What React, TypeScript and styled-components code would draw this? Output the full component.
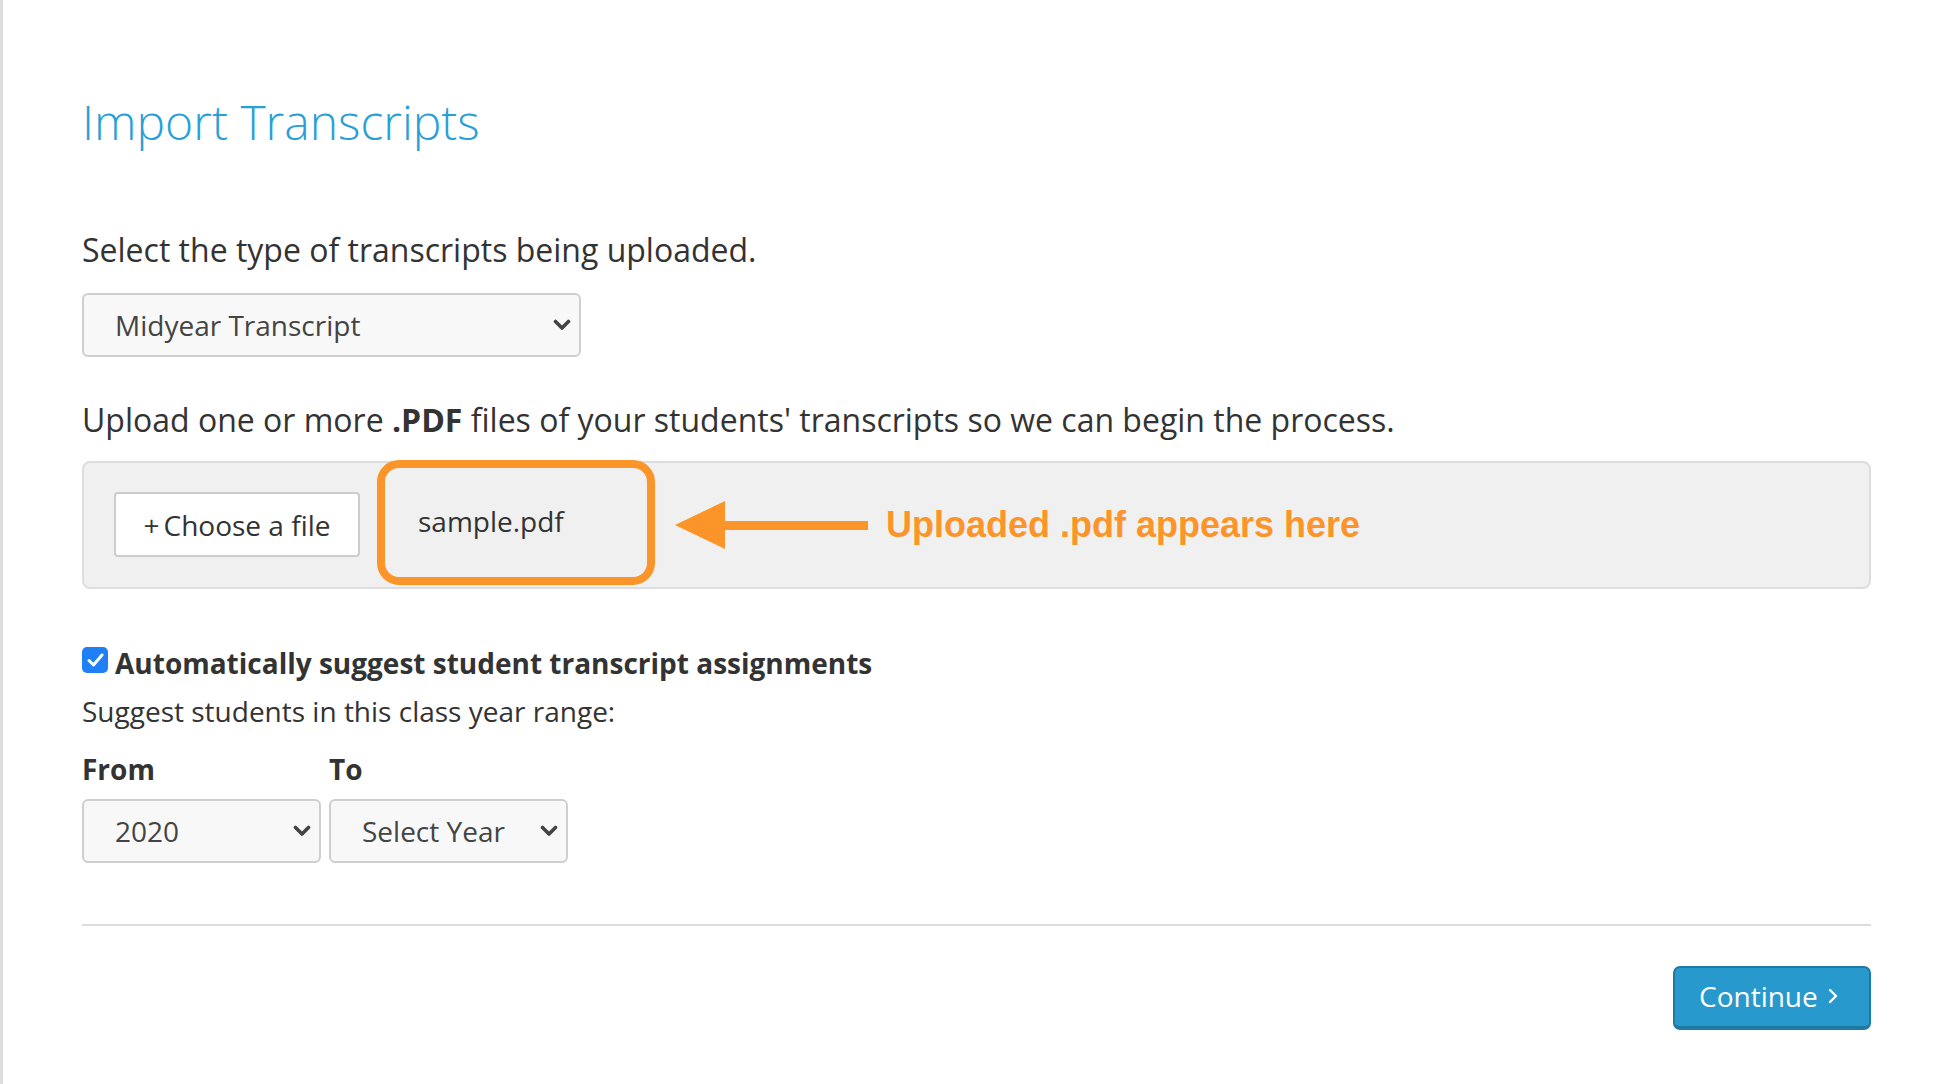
import React from 'react';
import styled, { createGlobalStyle } from 'styled-components';

const GlobalStyle = createGlobalStyle`
  html, body {
    margin: 0;
    padding: 0;
    background: #fff;
  }
  body {
    font-family: "Open Sans", "Noto Sans", sans-serif;
    color: #333;
  }
`;

const Page = styled.div`
  min-height: 100vh;
  box-sizing: border-box;
  border-left: 3px solid #ddd;
  padding: 93px 73px 40px 79px;
  display: flex;
  flex-direction: column;
`;

const Title = styled.h1`
  margin: 0;
  font-size: 48px;
  font-weight: 300;
  line-height: 1.2;
  color: #2a9fd6;
`;

const Prompt = styled.p<{ $top: number }>`
  margin: ${p => p.$top}px 0 0;
  font-size: 32px;
  line-height: 44px;
  color: #333;
`;

const Hint = styled.p`
  margin: 8px 0 0;
  font-size: 28px;
  line-height: 40px;
  color: #333;
`;

const SelectBox = styled.div<{ $width: number }>`
  box-sizing: border-box;
  width: ${p => p.$width}px;
  height: 64px;
  display: flex;
  align-items: center;
  justify-content: space-between;
  padding: 0 8px 0 31px;
  background: #f8f8f8;
  border: 2px solid #cfcfcf;
  border-radius: 6px;
  font-size: 28px;
  color: #444;
`;

const Chevron = () => (
  <svg width="18" height="12" viewBox="0 0 18 12">
    <path d="M2.5 2.5 L9 9 L15.5 2.5" fill="none" stroke="#444" strokeWidth="3.6" strokeLinecap="round" strokeLinejoin="round" />
  </svg>
);

const Select = ({ value, width, top }: { value: string; width: number; top?: number }) => (
  <SelectBox $width={width} style={top ? { marginTop: top } : undefined}>
    <span>{value}</span>
    <Chevron />
  </SelectBox>
);

const UploadPanel = styled.div`
  margin-top: 19px;
  box-sizing: border-box;
  height: 128px;
  display: flex;
  align-items: center;
  padding: 0 30px;
  background: #f0f0f0;
  border: 2px solid #ddd;
  border-radius: 8px;
`;

const ChooseButton = styled.div`
  box-sizing: border-box;
  width: 246px;
  height: 65px;
  display: flex;
  align-items: center;
  justify-content: center;
  background: #fff;
  border: 2px solid #ccc;
  border-radius: 4px;
  font-size: 28px;
  color: #333;
  gap: 4px;
`;

const Highlight = styled.div`
  box-sizing: border-box;
  width: 278px;
  height: 125px;
  margin: -5px 0 0 17px;
  padding: 0 0 2px 33px;
  display: flex;
  align-items: center;
  border: 8px solid #fb9529;
  border-radius: 22px;
  font-size: 28px;
  color: #333;
`;

const Note = styled.span`
  margin-left: 18px;
  font-family: "Liberation Sans", Arial, sans-serif;
  font-weight: 700;
  font-size: 36px;
  color: #fb9529;
`;

const Arrow = () => (
  <svg width="193" height="50" viewBox="0 0 193 50" style={{ marginLeft: 20, marginTop: 2 }}>
    <polygon points="0,24 50,0 50,48" fill="#fb9529" />
    <rect x="48" y="20" width="145" height="9" fill="#fb9529" />
  </svg>
);

const CheckRow = styled.label`
  margin-top: 54px;
  display: flex;
  align-items: center;
  gap: 7px;
  font-size: 28px;
  font-weight: 700;
  line-height: 40px;
  color: #333;
`;

const CheckBox = styled.span`
  width: 26px;
  height: 26px;
  border-radius: 5px;
  background: #1f7ff5;
  display: inline-flex;
  align-items: center;
  justify-content: center;
  margin-top: -5px;
`;

const RangeGrid = styled.div`
  margin-top: 20px;
  display: grid;
  grid-template-columns: 239px 239px;
  column-gap: 8px;
  row-gap: 12px;
`;

const FieldLabel = styled.span`
  font-size: 28px;
  font-weight: 700;
  line-height: 36px;
  color: #333;
`;

const Rule = styled.hr`
  margin: 61px 0 0;
  border: none;
  border-top: 2px solid #ddd;
`;

const Footer = styled.div`
  margin-top: 40px;
  display: flex;
  justify-content: flex-end;
`;

const ContinueButton = styled.button`
  box-sizing: border-box;
  width: 198px;
  height: 64px;
  display: flex;
  align-items: center;
  gap: 10px;
  padding: 0 0 2px 24px;
  background: #2899cc;
  border: 2px solid #1f7aa3;
  border-bottom-width: 4px;
  border-radius: 7px;
  font-family: "Open Sans", sans-serif;
  font-size: 28px;
  color: #fff;
`;

export default function App() {
  return (
    <>
      <GlobalStyle />
      <Page>
        <Title>Import Transcripts</Title>
        <Prompt $top={77}>Select the type of transcripts being uploaded.</Prompt>
        <Select value="Midyear Transcript" width={499} top={21} />
        <Prompt $top={41}>
          Upload one or more <b>.PDF</b> files of your students' transcripts so we can begin the process.
        </Prompt>
        <UploadPanel>
          <ChooseButton>
            <span>+</span>
            <span>Choose a file</span>
          </ChooseButton>
          <Highlight>sample.pdf</Highlight>
          <Arrow />
          <Note>Uploaded .pdf appears here</Note>
        </UploadPanel>
        <CheckRow>
          <CheckBox>
            <svg width="17" height="14" viewBox="0 0 17 14">
              <path d="M2 7.5 L6.5 12 L15 2" fill="none" stroke="#fff" strokeWidth="3" strokeLinecap="round" strokeLinejoin="round" />
            </svg>
          </CheckBox>
          Automatically suggest student transcript assignments
        </CheckRow>
        <Hint>Suggest students in this class year range:</Hint>
        <RangeGrid>
          <FieldLabel>From</FieldLabel>
          <FieldLabel>To</FieldLabel>
          <Select value="2020" width={239} />
          <Select value="Select Year" width={239} />
        </RangeGrid>
        <Rule />
        <Footer>
          <ContinueButton>
            Continue
            <svg width="10" height="16" viewBox="0 0 10 16">
              <path d="M2 2 L8 8 L2 14" fill="none" stroke="#fff" strokeWidth="2.4" strokeLinecap="round" strokeLinejoin="round" />
            </svg>
          </ContinueButton>
        </Footer>
      </Page>
    </>
  );
}
